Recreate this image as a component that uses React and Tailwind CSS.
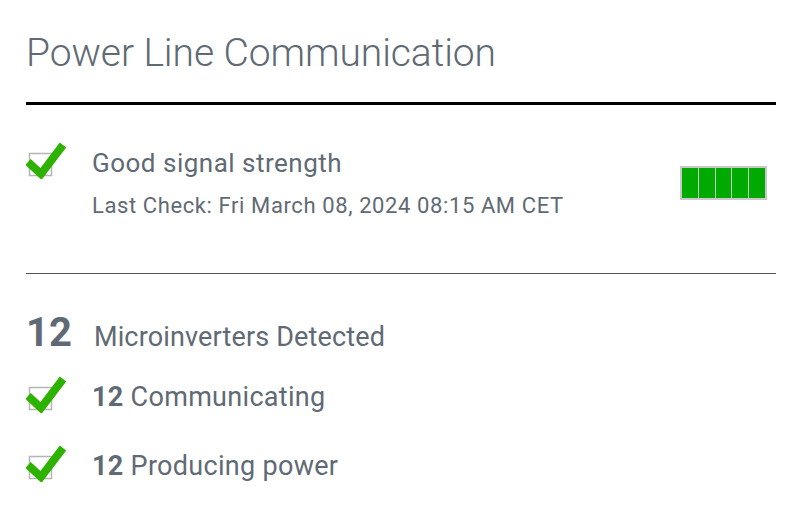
function CheckIcon() {
  return (
    <svg width="66" height="38" viewBox="0 0 66 38" className="shrink-0">
      <rect x="3.5" y="12.5" width="22" height="22" fill="#fff" stroke="#b5b5b5" strokeWidth="1.5" />
      <polyline points="2,21 15,33 37,4" fill="none" stroke="#2db200" strokeWidth="8" strokeLinejoin="miter" />
    </svg>
  )
}

function SignalBars({ level = 5 }) {
  return (
    <div className="flex h-[34px] w-[87px] border border-[#c8c8c8] bg-[#c8c8c8] gap-px p-px mt-[25px] mr-[9px]">
      {[0, 1, 2, 3, 4].map((i) => (
        <div key={i} className={`flex-1 ${i < level ? 'bg-[#00aa00]' : 'bg-white'}`} />
      ))}
    </div>
  )
}

export default function App() {
  return (
    <div className="bg-white min-h-[527px] px-[26px] pr-[24px] text-[#5f6a75] font-['Roboto',sans-serif]">
      <h1 className="pt-[31px] text-[39px] leading-[44px] font-light tracking-[-0.08px]">Power Line Communication</h1>
      <div className="mt-[27px] h-[3px] bg-black" />

      <div className="mt-[36px] flex items-start">
        <CheckIcon />
        <div className="mt-[7px] flex-1">
          <div className="text-[26px] leading-[30px] tracking-[0.5px]">Good signal strength</div>
          <div className="mt-[15px] text-[22px] leading-[26px] tracking-[0.6px]">Last Check: Fri March 08, 2024 08:15 AM CET</div>
        </div>
        <SignalBars level={5} />
      </div>

      <div className="mt-[54px] h-px bg-[#555]" />

      <div className="mt-[37px] flex items-baseline">
        <span className="text-[40px] leading-[44px] font-bold">12</span>
        <span className="ml-[22px] text-[27px] leading-[44px] tracking-[0.15px]">Microinverters Detected</span>
      </div>

      <div className="mt-[16px] flex items-start">
        <CheckIcon />
        <div className="mt-[6px] text-[27px] leading-[32px] tracking-[0.3px]">
          <span className="font-bold">12</span> Communicating
        </div>
      </div>

      <div className="mt-[31px] flex items-start">
        <CheckIcon />
        <div className="mt-[6px] text-[27px] leading-[32px] tracking-[0.3px]">
          <span className="font-bold">12</span> Producing power
        </div>
      </div>
    </div>
  )
}
